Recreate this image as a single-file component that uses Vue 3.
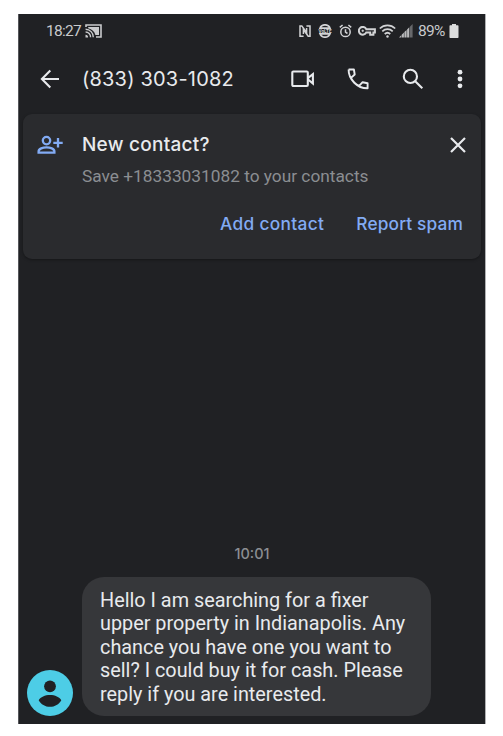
<template>
  <div class="phone">
    <!-- status bar -->
    <div class="status-bar">
      <span class="clock">{{ clock }}</span>
      <svg class="cast" width="17" height="14" viewBox="0 0 17 14">
        <path d="M1 3V1h15v12h-5" fill="none" stroke="#c9cacc" stroke-width="1.6" />
        <path d="M3.2 3h10.8v8h-3.6C9.600 7.500 7 5 3.200 4.200z" fill="#c9cacc" />
        <path d="M.6 5.300a7.700 7.700 0 0 1 7.700 7.900M.6 8a5.100 5.100 0 0 1 5 5.200" fill="none" stroke="#c9cacc" stroke-width="1.400" />
        <path d="M.5 10.700a2.700 2.700 0 0 1 2.600 2.700H.5z" fill="#c9cacc" />
      </svg>
      <div class="status-icons">
        <svg width="12" height="12" viewBox="0 0 12 12" fill="none" stroke="#d2d3d5" stroke-width="1.500">
          <path d="M4.600 11.200H1V.9h1.800L7.600 7.500V3" />
          <path d="M7.400.9H11v10.300H9.200L4.400 4.500V9" />
        </svg>
        <svg class="volte" width="14" height="14" viewBox="0 0 14 14">
          <path d="M2 4.200C2.800 1.900 4.700.8 7 .8s4.200 1.100 5 3.400zM2 9.800c.8 2.300 2.700 3.400 5 3.400s4.200-1.100 5-3.400z" fill="none" stroke="#d2d3d5" stroke-width="1.700" />
          <text x="7" y="8.700" text-anchor="middle" textLength="13" lengthAdjust="spacingAndGlyphs">VoLTE</text>
        </svg>
        <svg class="alarm" width="13" height="14" viewBox="0 0 13 14" fill="none" stroke="#d2d3d5" stroke-width="1.500">
          <circle cx="6.500" cy="7.900" r="4.700" />
          <path d="M6.500 5.200v3l2 1.300M.8 3.400L3.600 1M12.200 3.400L9.400 1" />
        </svg>
        <svg class="key" width="18" height="10" viewBox="0 0 18 10" fill="none" stroke="#d2d3d5" stroke-width="2">
          <path d="M8.300 3.200H16.900v3.200h-1.500v2.400h-3.200V6.400H8.300A3.900 3.900 0 1 1 8.300 3.200z" />
          <circle cx="4.700" cy="4.800" r=".8" fill="#d2d3d5" stroke-width=".8" />
        </svg>
        <svg class="wifi" width="17" height="14" viewBox="0 0 17 14" fill="none" stroke="#d2d3d5" stroke-width="1.700">
          <path d="M.8 4.500a11 11 0 0 1 15.400 0M3.300 7.300a7.500 7.500 0 0 1 10.400 0M5.700 10a4.200 4.200 0 0 1 5.600 0" />
          <circle cx="8.500" cy="12.500" r="1.200" fill="#d2d3d5" stroke="none" />
        </svg>
        <svg class="signal" width="14" height="14" viewBox="0 0 14 14">
          <path d="M0 13.500L2.200 11.300v2.200zM2.700 10.800l2.200-2.200v4.900h-2.200zM5.400 8.100l2.200-2.200v7.600h-2.200zM8.100 5.400l2.200-2.200v10.300h-2.200z" fill="#b9babc" />
          <path d="M10.900 2.700l2.700-2.700v13.500h-2.700z" fill="#67686b" />
        </svg>
        <span class="percent">{{ battery }}%</span>
        <svg class="battery" width="10" height="14" viewBox="0 0 10 14">
          <path d="M3 0h4v1.200h1.800q.7 0 .7.700v11.300q0 .7-.7.700H1.200q-.7 0-.7-.7V1.900q0-.7.7-.7H3z" fill="#dcdddd" />
        </svg>
      </div>
    </div>

    <!-- app bar -->
    <div class="app-bar">
      <svg class="back" width="20" height="20" viewBox="0 0 20 20" fill="none" stroke="#e8eaed" stroke-width="2.100">
        <path d="M19 10H2.400M10.300 1.500L1.900 10l8.400 8.500" />
      </svg>
      <h1>{{ number }}</h1>
      <div class="actions">
        <svg width="24" height="18" viewBox="0 0 24 18" fill="none" stroke="#e8eaed" stroke-width="2.100">
          <rect x="2.300" y="1.500" width="15.500" height="14.500" rx="1" />
          <path d="M17.800 8.200L22.900 4.200v9.300l-5.100-4.200" />
        </svg>
        <svg width="22" height="22" viewBox="0 0 22 22" fill="none" stroke="#e8eaed" stroke-width="1.900" stroke-linejoin="round">
          <path d="M1.600 1.500h5.300l.8 5-3.700 3.400M12.100 17.900l3.500-3.700 5 1.100v5C10.500 20.500 1.500 11.500 1.600 1.500M4 9.900C6 13.700 8.700 16.300 12.100 17.900" />
        </svg>
        <svg width="22" height="22" viewBox="0 0 22 22" fill="none" stroke="#e8eaed" stroke-width="2.100">
          <circle cx="8.400" cy="8.400" r="6.600" />
          <path d="M13.200 13.200l7.100 7.100" />
        </svg>
        <svg width="6" height="20" viewBox="0 0 6 20" fill="#e8eaed">
          <circle cx="3" cy="3.200" r="2.400" />
          <circle cx="3" cy="10" r="2.400" />
          <circle cx="3" cy="16.800" r="2.400" />
        </svg>
      </div>
    </div>

    <!-- new contact banner -->
    <div class="card">
      <svg class="add-person" width="27" height="20" viewBox="0 0 27 20" fill="none" stroke="#82abf4" stroke-width="2.300">
        <circle cx="9.500" cy="5.600" r="3.700" />
        <path d="M1.600 17.600v-1.200c0-2.700 4.300-4 7.900-4s7.900 1.300 7.900 4v1.200zM21 3v9.600M16.300 7.800h9.400" />
      </svg>
      <div class="card-text">
        <h2>New contact?</h2>
        <p>Save {{ savedNumber }} to your contacts</p>
      </div>
      <svg class="close" width="16" height="16" viewBox="0 0 16 16" fill="none" stroke="#e8eaed" stroke-width="2.200">
        <path d="M1 1l14 14M15 1L1 15" />
      </svg>
      <div class="card-buttons">
        <button class="add">Add contact</button>
        <button class="spam">Report spam</button>
      </div>
    </div>

    <!-- conversation -->
    <div class="messages">
      <div class="time">{{ message.time }}</div>
      <div class="row">
        <svg class="avatar" width="46" height="46" viewBox="0 0 46 46">
          <circle cx="23" cy="23" r="23" fill="#4dcde6" />
          <circle cx="23" cy="16.300" r="5.900" fill="#202124" />
          <path d="M11.700 30.200C13.500 27 18 25 23 25s9.500 2 11.300 5.200C32 34.300 27.800 36.800 23 36.800s-9-2.500-11.300-6.600z" fill="#202124" />
        </svg>
        <div class="bubble">
          <div v-for="(line, index) in message.lines" :key="index">{{ line }}</div>
        </div>
      </div>
    </div>
  </div>
</template>

<script setup>
import { ref } from 'vue';

const clock = ref('18:27');
const battery = ref(89);
const number = ref('(833) 303-1082');
const savedNumber = ref('+18333031082');

const message = ref({
  time: '10:01',
  lines: [
    'Hello I am searching for a fixer',
    'upper property in Indianapolis. Any',
    'chance you have one you want to',
    'sell? I could buy it for cash. Please',
    'reply if you are interested.'
  ]
});
</script>

<style>
body {
  margin: 0;
  background: #fff;
}
</style>

<style scoped>
.phone {
  box-sizing: border-box;
  width: 468px;
  height: 710px;
  margin: 14px 0 0 18px;
  border-left: 1px solid #55565a;
  border-right: 1px solid #b0b1b3;
  background: #202124;
  font-family: Roboto, "Liberation Sans", sans-serif;
  display: flex;
  flex-direction: column;
}

svg {
  display: block;
  flex: none;
}

.status-bar {
  height: 34px;
  padding: 0 26px 0 27px;
  display: flex;
  align-items: center;
  color: #c9cacc;
  font-size: 15.5px;
}

.clock {
  width: 39px;
  letter-spacing: -0.7px;
}

.status-icons {
  margin-left: auto;
  display: flex;
  align-items: center;
}

.volte { margin-left: 7px; }
.volte text {
  font-size: 5px;
  font-weight: 700;
  fill: #d2d3d5;
}
.alarm { margin-left: 7px; }
.key { margin-left: 6px; }
.wifi { margin-left: 3px; }
.signal { margin-left: 3px; }
.percent {
  width: 30px;
  margin-left: 5px;
  letter-spacing: -0.7px;
}
.battery { margin-left: 1px; }

.app-bar {
  height: 62px;
  padding: 0 22px 0 21px;
  display: flex;
  align-items: center;
}

h1 {
  margin: 0 0 0 22px;
  color: #e8eaed;
  font: 400 20px Inter, "Liberation Sans", sans-serif;
  letter-spacing: 0.2px;
  white-space: nowrap;
}

.actions {
  margin-left: auto;
  display: flex;
  align-items: center;
  gap: 33px;
}

.card {
  height: 145px;
  margin: 4px 4px 0 4px;
  box-sizing: border-box;
  padding: 19px 15px 0 14px;
  border-radius: 9px;
  background: #2a2b2e;
  box-shadow: 0 1px 3px rgba(0, 0, 0, 0.35);
  display: grid;
  grid-template-columns: 45px 1fr 16px;
  align-content: start;
}

.add-person {
  margin-top: 2px;
}

.close {
  margin-top: 4px;
}

h2 {
  margin: 0;
  color: #e8eaed;
  font: 500 19px/24px Inter, "Liberation Sans", sans-serif;
  letter-spacing: 0.25px;
}

.card p {
  margin: 9px 0 0;
  color: #8b8e92;
  font-size: 17.3px;
  line-height: 20px;
  white-space: nowrap;
}

.card-buttons {
  grid-column: 1 / -1;
  margin-top: 26px;
  padding-right: 3px;
  display: flex;
  justify-content: flex-end;
  gap: 32px;
}

button {
  padding: 0;
  border: 0;
  background: none;
  color: #82abf4;
  font: 500 17.3px/24px Inter, "Liberation Sans", sans-serif;
  letter-spacing: 0.15px;
  white-space: nowrap;
}

.add {
  letter-spacing: 0.35px;
}

.messages {
  margin-top: auto;
  padding: 0 0 8px 8px;
}

.time {
  margin-bottom: 14px;
  padding-right: 8px;
  text-align: center;
  color: #8b8e92;
  font: 500 14.5px/18px Inter, "Liberation Sans", sans-serif;
}

.row {
  display: flex;
  align-items: flex-end;
  gap: 9px;
}

.bubble {
  box-sizing: border-box;
  width: 349px;
  height: 139px;
  padding: 12px 0 0 18px;
  border-radius: 22px;
  background: #36373a;
  color: #e8eaed;
  font-size: 19.83px;
  line-height: 23.4px;
  white-space: nowrap;
}
</style>
